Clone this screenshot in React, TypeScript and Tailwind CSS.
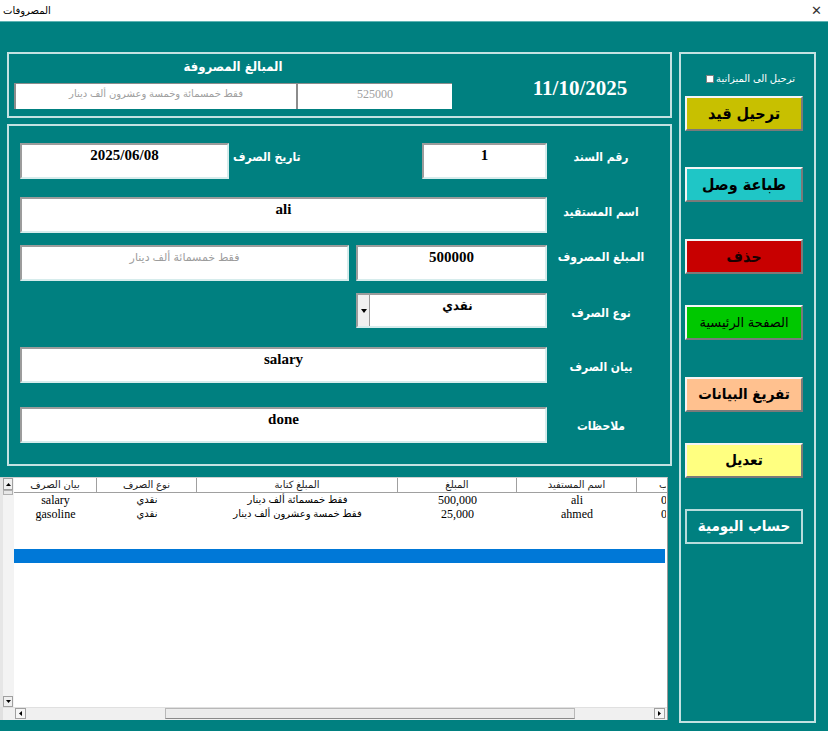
import React from "react";

const serif = "font-['Liberation_Serif','DejaVu_Sans',serif]";
const arB = "font-['DejaVu_Sans_Condensed','DejaVu_Sans',sans-serif] font-bold whitespace-nowrap";

function Box({ w, h, children, className = "" }: { w: string; h: string; children?: React.ReactNode; className?: string }) {
  return (
    <div
      className={`${w} ${h} bg-white border-2 border-t-[#9c9c9c] border-l-[#9c9c9c] border-b-[#d6ecec] border-r-[#d6ecec] flex justify-center items-start shrink-0 ${className}`}
    >
      {children}
    </div>
  );
}

function Val({ children }: { children: React.ReactNode }) {
  return <span className={`${serif} font-bold text-[15px] leading-[18px] pt-[1px] text-black`}>{children}</span>;
}

function Label({ children, top }: { children: React.ReactNode; top: string }) {
  return (
    <div className={`w-[108px] text-center text-white ${arB} text-[12px] leading-[20px] ${top}`}>{children}</div>
  );
}

function Btn({ children, bg, mt, text = "text-black", size = `${arB} text-[16px]` }: { children: React.ReactNode; bg: string; mt: string; text?: string; size?: string }) {
  return (
    <div
      className={`${mt} ml-[4px] w-[118px] h-[35px] ${bg} border-2 border-t-[#f4f4f4] border-l-[#f4f4f4] border-b-[#7a7a7a] border-r-[#7a7a7a] flex items-center justify-center ${text} ${size}`}
    >
      {children}
    </div>
  );
}

const cols = [
  { w: "w-[83px]", h: "بيان الصرف" },
  { w: "w-[100px]", h: "نوع الصرف" },
  { w: "w-[201px]", h: "المبلغ كتابة" },
  { w: "w-[119px]", h: "المبلغ" },
  { w: "w-[120px]", h: "اسم المستفيد" },
];

const rows = [
  ["salary", "نقدي", "فقط خمسمائة ألف دينار", "500,000", "ali"],
  ["gasoline", "نقدي", "فقط خمسة وعشرون ألف دينار", "25,000", "ahmed"],
];

export default function App() {
  return (
    <div className="w-[828px] h-[731px] bg-[#008080] flex flex-col overflow-hidden font-['Liberation_Sans','DejaVu_Sans',sans-serif]">
      {/* title bar */}
      <div className="h-[21px] bg-white flex items-center justify-between pl-[3px] pr-[6px] shrink-0">
        <span className="text-[10px] text-black">المصروفات</span>
        <span className="text-[13px] text-[#333] font-light">✕</span>
      </div>
      <div className="h-px bg-[#5fb3b3] shrink-0" />

      <div className="flex flex-1">
        {/* left column */}
        <div className="w-[672px] flex flex-col">
          {/* top panel */}
          <div className="mt-[30px] ml-[7px] w-[665px] h-[66px] border-2 border-[#c4e2e2] flex">
            <div className="ml-[5px] w-[438px] flex flex-col">
              <div className={`h-[20px] mt-[3px] text-center text-white ${arB} text-[13px] leading-[20px]`}>المبالغ المصروفة</div>
              <div className="mt-[6px] flex h-[26px]">
                <div className="w-[282px] h-[26px] bg-white border-l-2 border-t border-[#8c8c8c] flex justify-center pt-[3px]">
                  <span className="text-[10px] text-[#a0a0a0] leading-[14px]">فقط خمسمائة وخمسة وعشرون ألف دينار</span>
                </div>
                <div className="w-[156px] h-[26px] bg-white border-l-2 border-t border-[#8c8c8c] flex justify-center pt-[3px]">
                  <span className={`${serif} text-[12px] text-[#a0a0a0] leading-[14px]`}>525000</span>
                </div>
              </div>
            </div>
            <div className="flex-1 flex items-center justify-center pl-[38px] pt-[8px]">
              <span className={`${serif} font-bold text-[21px] text-white`}>11/10/2025</span>
            </div>
          </div>

          {/* form panel */}
          <div className="mt-[6px] ml-[7px] w-[665px] h-[342px] border-2 border-[#c4e2e2] flex flex-col pl-[11px] pt-[17px]">
            {/* row 1 */}
            <div className="flex h-[36px]">
              <Box w="w-[209px]" h="h-[36px]"><Val>2025/06/08</Val></Box>
              <div className="w-[193px] pl-[4px]">
                <div className={`w-[64px] text-center text-white ${arB} text-[12px] leading-[20px] mt-[4px]`}>تاريخ الصرف</div>
              </div>
              <Box w="w-[125px]" h="h-[36px]"><Val>1</Val></Box>
              <Label top="mt-[4px]">رقم السند</Label>
            </div>
            {/* row 2 */}
            <div className="flex h-[36px] mt-[18px]">
              <Box w="w-[527px]" h="h-[36px]"><Val>ali</Val></Box>
              <Label top="mt-[5px]">اسم المستفيد</Label>
            </div>
            {/* row 3 */}
            <div className="flex h-[36px] mt-[12px]">
              <Box w="w-[329px]" h="h-[36px]" className="pt-[3px]">
                <span className="text-[11px] text-[#9c9c9c] leading-[14px]">فقط خمسمائة ألف دينار</span>
              </Box>
              <div className="w-[7px]" />
              <Box w="w-[191px]" h="h-[36px]"><Val>500000</Val></Box>
              <Label top="mt-[2px]">المبلغ المصروف</Label>
            </div>
            {/* row 4 */}
            <div className="flex h-[35px] mt-[12px]">
              <div className="w-[336px]" />
              <div className="w-[191px] h-[35px] bg-white border-2 border-t-[#9c9c9c] border-l-[#9c9c9c] border-b-[#d6ecec] border-r-[#d6ecec] flex">
                <div className="w-[12px] h-full bg-[#f0f0f0] border-r border-[#9a9a9a] flex items-center justify-center">
                  <svg width="6" height="4" viewBox="0 0 6 4"><path d="M0 0h6L3 4z" fill="#000" /></svg>
                </div>
                <div className="flex-1 flex justify-center pt-[2px]">
                  <span className={`${arB} text-[13px] leading-[18px] text-black`}>نقدي</span>
                </div>
              </div>
              <Label top="mt-[10px]">نوع الصرف</Label>
            </div>
            {/* row 5 */}
            <div className="flex h-[36px] mt-[19px]">
              <Box w="w-[527px]" h="h-[36px]"><Val>salary</Val></Box>
              <Label top="mt-[10px]">بيان الصرف</Label>
            </div>
            {/* row 6 */}
            <div className="flex h-[36px] mt-[24px]">
              <Box w="w-[527px]" h="h-[36px]"><Val>done</Val></Box>
              <Label top="mt-[9px]">ملاحظات</Label>
            </div>
          </div>

          {/* grid */}
          <div className="mt-[11px] w-[668px] h-[243px] bg-white border-r border-[#9a9a9a] border-t border-t-[#d0d0d0] flex flex-col overflow-hidden">
            <div className="flex flex-1 min-h-0">
              {/* vertical scrollbar */}
              <div className="w-[14px] h-full bg-[#f3f3f3] border-l-[3px] border-[#e6e6e6] flex flex-col justify-between">
                <div className="flex flex-col">
                  <div className="h-[12px] w-[10px] bg-[#f0f0f0] border border-[#a0a0a0] flex items-center justify-center">
                    <svg width="5" height="3" viewBox="0 0 5 3"><path d="M0 3h5L2.5 0z" fill="#000" /></svg>
                  </div>
                  <div className="h-[5px] w-[10px] bg-[#e8e8e8] border border-[#b0b0b0]" />
                </div>
                <div className="h-[11px] w-[10px] bg-[#f0f0f0] border border-[#a0a0a0] flex items-center justify-center">
                  <svg width="5" height="3" viewBox="0 0 5 3"><path d="M0 0h5L2.5 3z" fill="#000" /></svg>
                </div>
              </div>
              {/* table */}
              <div className="flex-1 flex flex-col overflow-hidden">
                <div className="flex h-[15px] border-b border-[#a0a0a0] shrink-0">
                  {cols.map((c, i) => (
                    <div key={i} className={`${c.w} shrink-0 border-r border-[#a0a0a0] text-center text-[10px] leading-[14px] text-[#222]`}>
                      {c.h}
                    </div>
                  ))}
                  <div className="w-[29px] shrink-0 overflow-hidden whitespace-nowrap text-[10px] leading-[14px] text-[#222] pl-[22px]">ب</div>
                </div>
                {rows.map((r, ri) => (
                  <div key={ri} className="flex h-[14px] shrink-0">
                    {r.map((v, ci) => (
                      <div
                        key={ci}
                        className={`${cols[ci].w} shrink-0 text-center leading-[14px] ${ci === 0 || ci === 3 || ci === 4 ? `${serif} text-[12px]` : "text-[10px]"} text-black whitespace-nowrap overflow-hidden`}
                      >
                        {v}
                      </div>
                    ))}
                    <div className={`w-[29px] shrink-0 overflow-hidden whitespace-nowrap ${serif} text-[12px] leading-[14px] pl-[24px]`}>0</div>
                  </div>
                ))}
                <div className="h-[28px] shrink-0" />
                <div className="h-[14px] bg-[#0078d7] shrink-0 mr-[2px]" />
              </div>
            </div>
            {/* horizontal scrollbar */}
            <div className="h-[13px] flex bg-[#f0f0f0] shrink-0 border-t border-[#e0e0e0]">
              <div className="w-[14px] border-l-[3px] border-[#e0e0e0]" />
              <div className="ml-[1px] w-[11px] h-[11px] bg-[#f6f6f6] border border-[#a0a0a0] flex items-center justify-center">
                <svg width="3" height="5" viewBox="0 0 3 5"><path d="M3 0v5L0 2.5z" fill="#000" /></svg>
              </div>
              <div className="ml-[139px] w-[410px] h-[11px] bg-[#ececec] border border-[#b8b8b8] border-b-[#8a8a8a]" />
              <div className="ml-[79px] w-[11px] h-[11px] bg-[#f6f6f6] border border-[#a0a0a0] flex items-center justify-center">
                <svg width="3" height="5" viewBox="0 0 3 5"><path d="M0 0v5L3 2.5z" fill="#000" /></svg>
              </div>
            </div>
          </div>
        </div>

        {/* right panel */}
        <div className="mt-[30px] ml-[7px] w-[137px] h-[671px] border-2 border-[#c4e2e2] flex flex-col">
          <div className="mt-[18px] h-[14px] flex items-center justify-center gap-[2px] pl-[6px]">
            <div className="w-[8px] h-[8px] bg-white border border-[#808080]" />
            <span className="text-[10px] text-white leading-[14px]">ترحيل الى الميزانية</span>
          </div>
          <Btn bg="bg-[#c8c000]" mt="mt-[10px]">ترحيل قيد</Btn>
          <Btn bg="bg-[#1fc6c6]" mt="mt-[36px]">طباعة وصل</Btn>
          <Btn bg="bg-[#c80000]" mt="mt-[37px]" text="text-[#1a0000]">حذف</Btn>
          <Btn bg="bg-[#00c800]" mt="mt-[31px]" size="text-[13px] whitespace-nowrap">الصفحة الرئيسية</Btn>
          <Btn bg="bg-[#ffc18f]" mt="mt-[37px]" size={`${arB} text-[15px]`}>تفريغ البيانات</Btn>
          <Btn bg="bg-[#ffff80]" mt="mt-[31px]" size={`${arB} text-[15px]`}>تعديل</Btn>
          <div className={`mt-[31px] ml-[4px] w-[118px] h-[35px] border-2 border-[#b8dcdc] flex items-center justify-center text-white ${arB} text-[15px]`}>
            حساب اليومية
          </div>
        </div>
      </div>
    </div>
  );
}
